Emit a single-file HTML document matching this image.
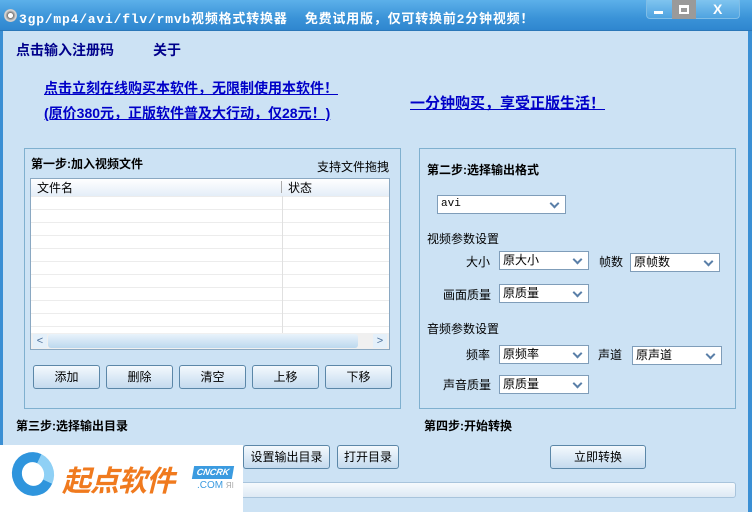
<!DOCTYPE html>
<html><head><meta charset="utf-8"><style>
*{margin:0;padding:0;box-sizing:border-box}
body{width:752px;height:512px;overflow:hidden;position:relative;background:#cce2f4;font-family:"Liberation Sans","Noto Sans CJK SC","WenQuanYi Zen Hei",sans-serif;font-size:12px;color:#000}
.a{position:absolute;white-space:nowrap}
.tb{left:0;top:0;width:752px;height:31px;background:linear-gradient(#5cb0ea,#3a93d8 60%,#2f86cf);border-bottom:1px solid #2a77b8}
.panel{position:absolute;border:1px solid #7fb0cf}
.btn{position:absolute;height:24px;border:1px solid #5b87a8;border-radius:3px;background:linear-gradient(#f4f9fd,#dceaf6 50%,#c4daee);text-align:center;line-height:22px;font-size:12px;color:#000}
.sel{position:absolute;height:19px;background:#fff;border:1px solid #7f9db9;font-size:12px;line-height:17px;padding-left:3px}
.sel:after{content:"";position:absolute;right:7px;top:4px;width:5px;height:5px;border-right:2px solid #5a7fa8;border-bottom:2px solid #5a7fa8;transform:rotate(45deg)}
.lk{color:#0000c8;text-decoration:underline;font-weight:bold;font-size:14px}
</style></head><body>
<div class="a tb"></div>
<div class="a" style="left:4px;top:9px;width:13px;height:13px;border-radius:50%;background:radial-gradient(#fff 25%,#777 30%,#ddd 60%,#555)"></div>
<div class="a" style="left:19px;top:8px;color:#fff;font-size:13px;font-weight:bold;letter-spacing:0.8px;font-family:'Liberation Mono','Noto Sans CJK SC',monospace">3gp/mp4/avi/flv/rmvb视频格式转换器 &nbsp;免费试用版，仅可转换前2分钟视频！</div>
<div class="a" style="left:646px;top:0;width:94px;height:19px;border:1px solid #7fbde6;border-top:none;border-radius:0 0 4px 4px;background:linear-gradient(#7fc4ef,#4fa3e0)"></div>
<div class="a" style="left:672px;top:0;width:24px;height:19px;background:#9a9a9a"></div>
<div class="a" style="left:654px;top:11px;width:9px;height:3px;background:#fff"></div>
<div class="a" style="left:679px;top:5px;width:10px;height:9px;border:2px solid #fff;border-top-width:3px"></div>
<div class="a" style="left:713px;top:1px;color:#fff;font-size:14px;font-weight:bold">X</div>
<div class="a" style="left:0;top:31px;width:3px;height:481px;background:#3a8fd4"></div>
<div class="a" style="left:748px;top:31px;width:4px;height:481px;background:#3a8fd4"></div>

<div class="a" style="left:16px;top:40px;color:#00008b;font-size:14px;font-weight:bold">点击输入注册码</div>
<div class="a" style="left:153px;top:40px;color:#00008b;font-size:14px;font-weight:bold">关于</div>
<div class="a lk" style="left:44px;top:78px">点击立刻在线购买本软件，无限制使用本软件！</div>
<div class="a lk" style="left:44px;top:103px">(原价380元，正版软件普及大行动，仅28元！)</div>
<div class="a lk" style="left:410px;top:92px;font-size:15px">一分钟购买，享受正版生活！</div>

<div class="panel" style="left:24px;top:148px;width:377px;height:261px"></div>
<div class="a" style="left:31px;top:155px;font-weight:bold">第一步:加入视频文件</div>
<div class="a" style="left:317px;top:158px">支持文件拖拽</div>
<div class="a" style="left:30px;top:178px;width:360px;height:172px;border:1px solid #8aa8c2;background:repeating-linear-gradient(#fff 0 12px,#ececec 12px 13px);background-position:0 5px"></div>
<div class="a" style="left:31px;top:179px;width:358px;height:17px;background:linear-gradient(#fff,#e4eef8)"></div>
<div class="a" style="left:37px;top:179px">文件名</div>
<div class="a" style="left:281px;top:181px;width:1px;height:12px;background:#aaa"></div>
<div class="a" style="left:282px;top:196px;width:1px;height:137px;background:#e0e0e0"></div>
<div class="a" style="left:288px;top:179px">状态</div>
<div class="a" style="left:31px;top:333px;width:358px;height:16px;background:#f0f0f0"></div>
<div class="a" style="left:48px;top:334px;width:310px;height:14px;border-radius:3px;background:linear-gradient(#e9f3fb,#bcd8ee)"></div>
<div class="a" style="left:33px;top:334px;width:14px;height:14px;background:#e4f0fa;color:#4a6e9a;font-size:11px;text-align:center;line-height:14px">&lt;</div>
<div class="a" style="left:373px;top:334px;width:14px;height:14px;background:#e4f0fa;color:#4a6e9a;font-size:11px;text-align:center;line-height:14px">&gt;</div>
<div class="btn" style="left:33px;top:365px;width:67px">添加</div>
<div class="btn" style="left:106px;top:365px;width:67px">删除</div>
<div class="btn" style="left:179px;top:365px;width:67px">清空</div>
<div class="btn" style="left:252px;top:365px;width:67px">上移</div>
<div class="btn" style="left:325px;top:365px;width:67px">下移</div>

<div class="panel" style="left:419px;top:148px;width:317px;height:261px"></div>
<div class="a" style="left:427px;top:161px;font-weight:bold">第二步:选择输出格式</div>
<div class="sel" style="left:437px;top:195px;width:129px;font-size:11px;font-family:'Liberation Mono',monospace">avi</div>
<div class="a" style="left:427px;top:230px">视频参数设置</div>
<div class="a" style="left:466px;top:253px">大小</div>
<div class="sel" style="left:499px;top:251px;width:90px">原大小</div>
<div class="a" style="left:599px;top:253px">帧数</div>
<div class="sel" style="left:630px;top:253px;width:90px">原帧数</div>
<div class="a" style="left:443px;top:286px">画面质量</div>
<div class="sel" style="left:499px;top:284px;width:90px">原质量</div>
<div class="a" style="left:427px;top:320px">音频参数设置</div>
<div class="a" style="left:466px;top:346px">频率</div>
<div class="sel" style="left:499px;top:345px;width:90px">原频率</div>
<div class="a" style="left:598px;top:346px">声道</div>
<div class="sel" style="left:632px;top:346px;width:90px">原声道</div>
<div class="a" style="left:443px;top:376px">声音质量</div>
<div class="sel" style="left:499px;top:375px;width:90px">原质量</div>

<div class="a" style="left:16px;top:417px;font-weight:bold">第三步:选择输出目录</div>
<div class="a" style="left:424px;top:417px;font-weight:bold">第四步:开始转换</div>
<div class="btn" style="left:243px;top:445px;width:87px">设置输出目录</div>
<div class="btn" style="left:337px;top:445px;width:62px">打开目录</div>
<div class="btn" style="left:550px;top:445px;width:96px">立即转换</div>
<div class="a" style="left:160px;top:482px;width:576px;height:16px;border:1px solid #a8c4dc;border-radius:3px;background:linear-gradient(#f6fafd,#dde9f4)"></div>

<div class="a" style="left:0;top:445px;width:243px;height:67px;background:#fff"></div>
<div class="a" style="left:12px;top:452px;width:42px;height:44px;border-radius:50%;border:10px solid #2f95dd;border-right-color:#8fd0f5;transform:rotate(-20deg)"></div>
<div class="a" style="left:62px;top:458px;color:#f07a1e;font-size:29px;font-weight:bold;font-style:italic;letter-spacing:-1px">起点软件</div>
<div class="a" style="left:193px;top:466px;width:40px;height:13px;background:#3b9be0;color:#fff;font-size:9px;font-weight:bold;font-style:italic;text-align:center;line-height:13px;transform:skewX(-10deg)">CNCRK</div>
<div class="a" style="left:197px;top:480px;color:#3b9be0;font-size:10px">.COM <span style="color:#aaa;font-size:8px">ЯΙ</span></div>
</body></html>
